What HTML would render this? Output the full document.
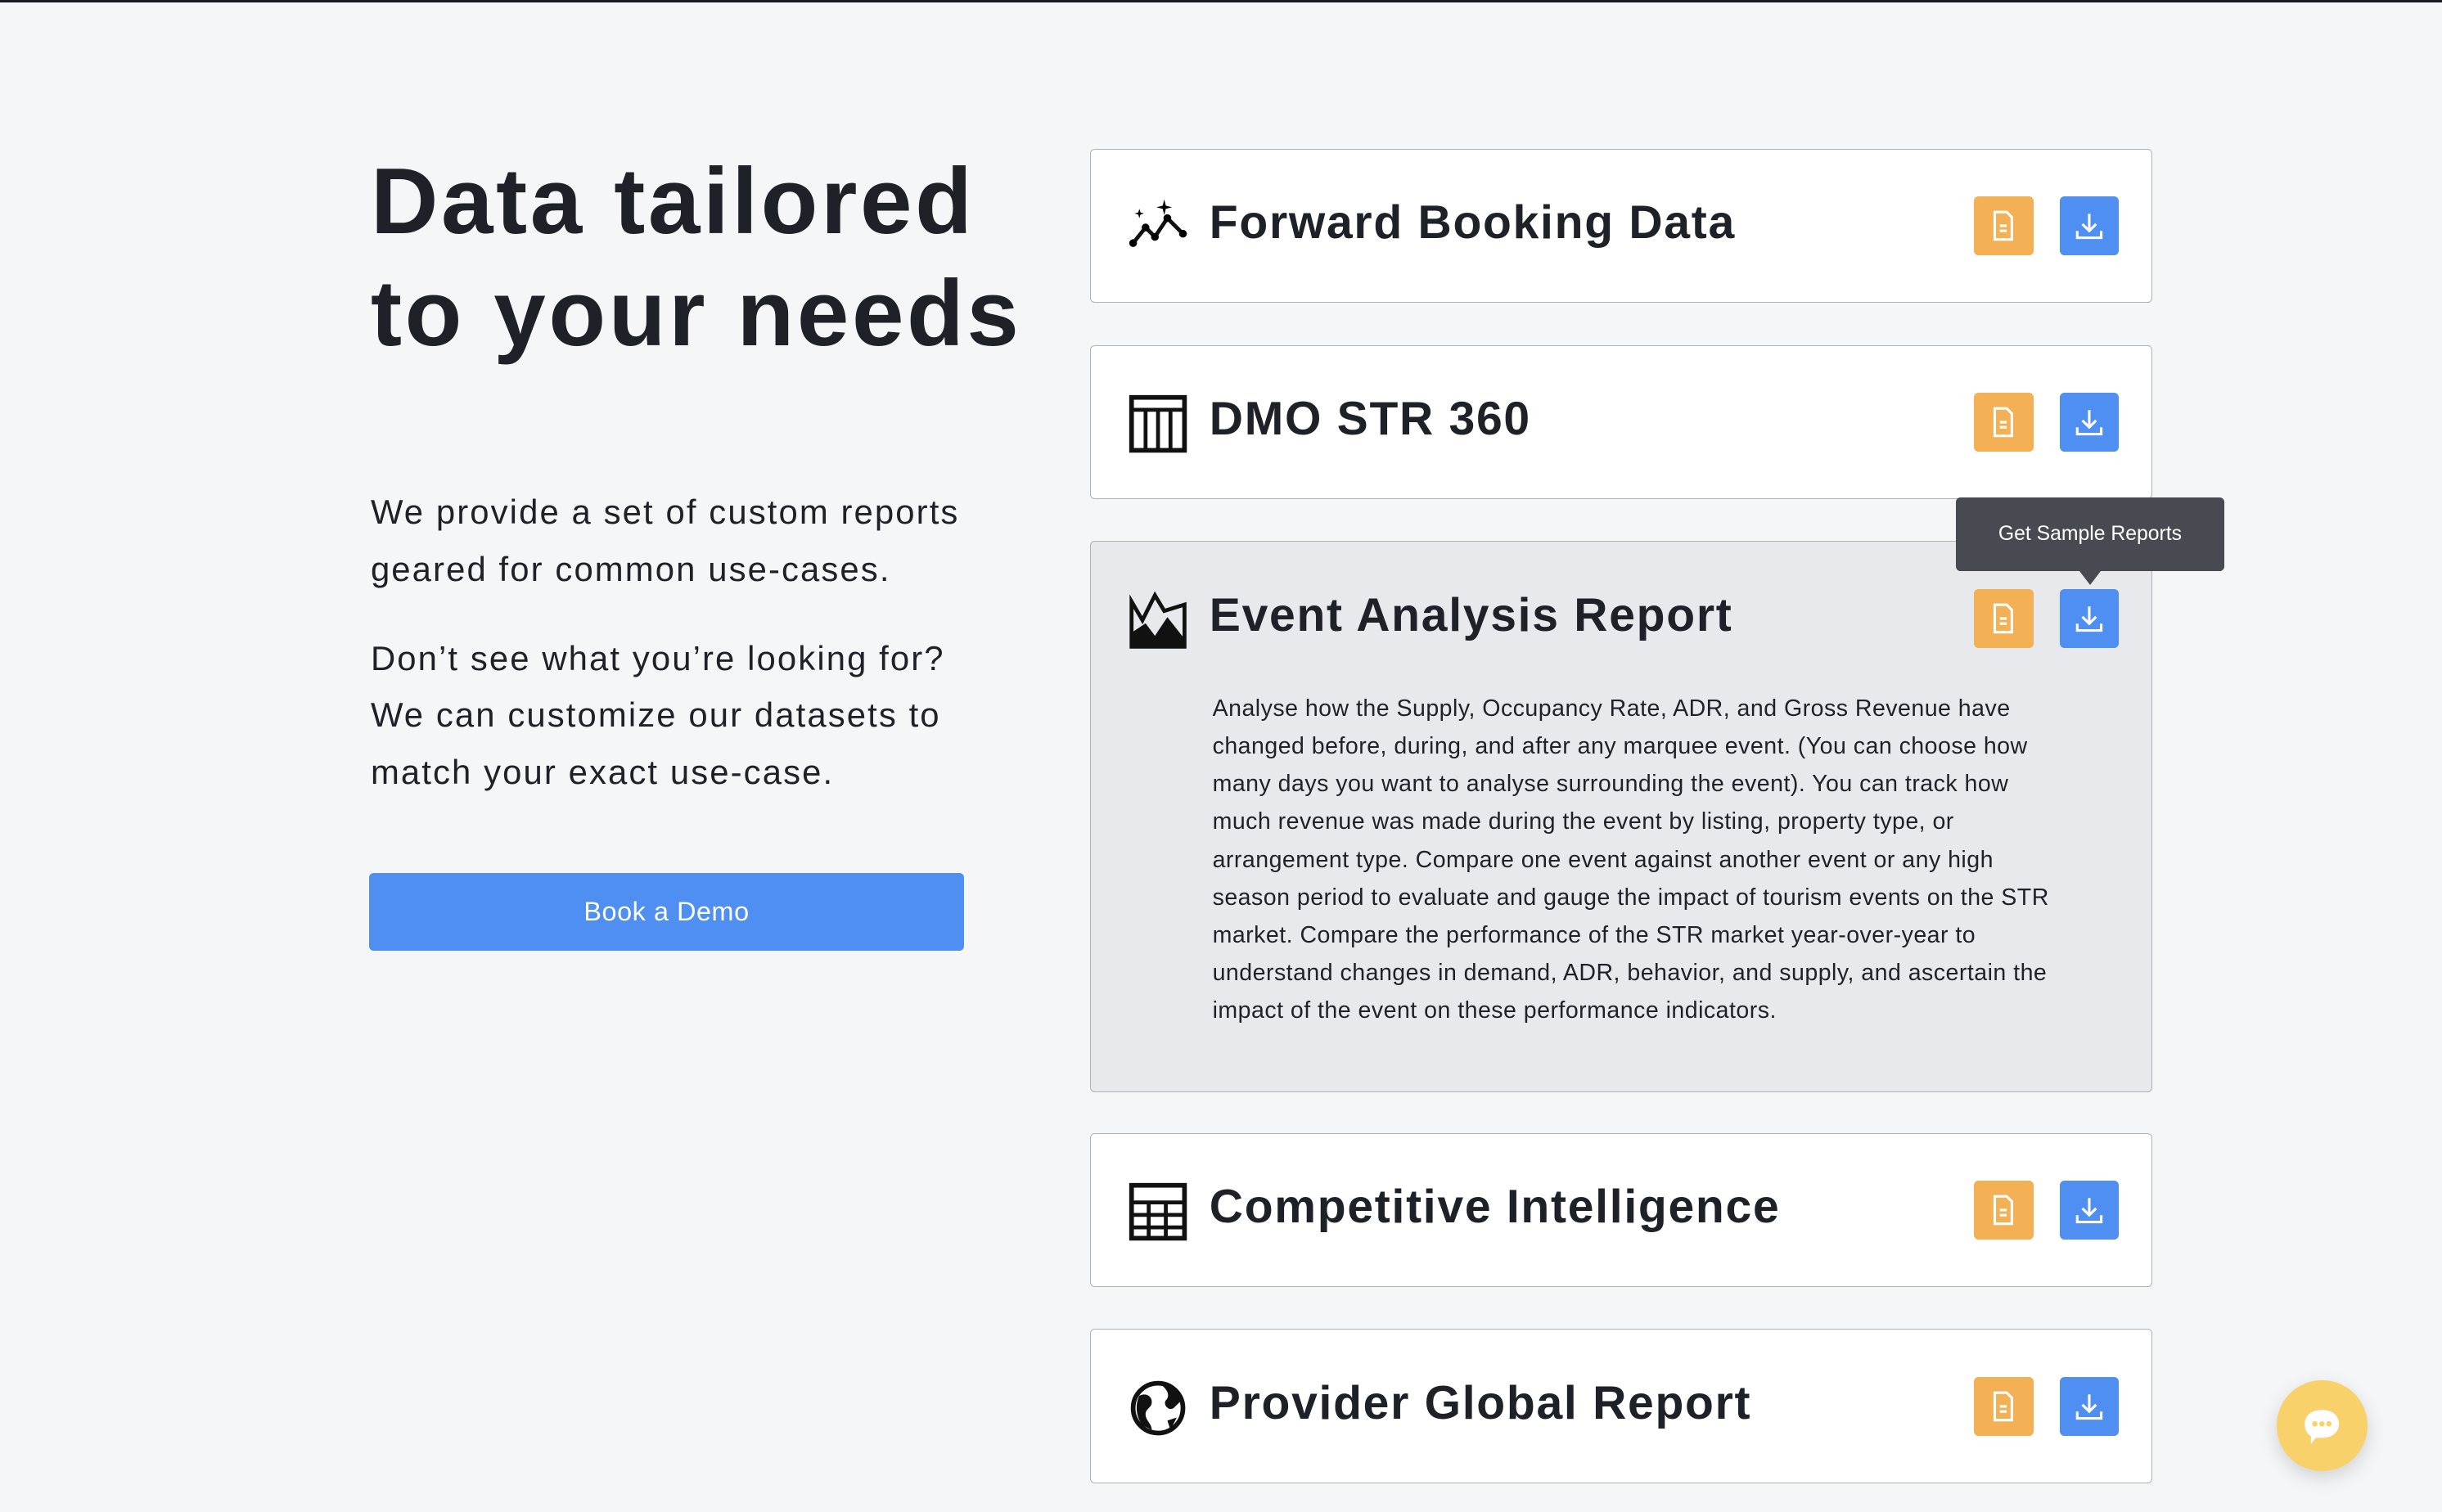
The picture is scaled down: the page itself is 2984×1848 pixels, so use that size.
<!DOCTYPE html>
<html><head><meta charset="utf-8"><style>
html,body{margin:0;padding:0}
body{width:1568px;height:971px;zoom:1.9031;background:#f5f6f8;font-family:"Liberation Sans",sans-serif;color:#1f2128;position:relative;overflow:hidden;border-top:2px solid #1a1c22;box-sizing:border-box}
.abs{position:absolute}
h1{position:absolute;left:238px;top:92px;margin:0;font-size:60px;line-height:72px;font-weight:bold;letter-spacing:1.9px}
.p{position:absolute;left:238px;font-size:22px;line-height:36.5px;margin:0;letter-spacing:1.1px}
.btn{position:absolute;left:237px;top:559px;width:382px;height:50px;background:#4f8ff2;border-radius:3px;color:#fff;font-size:17px;text-align:center;line-height:50px;letter-spacing:0.3px}
.card{position:absolute;left:700px;width:681px;height:98px;background:#fff;border:1px solid #b0b1b5;border-radius:3px}
.card .t{position:absolute;left:76px;top:27px;font-size:30px;font-weight:bold;line-height:40px;letter-spacing:0.9px}
.card .ic{position:absolute;left:23px;top:30px;width:40px;height:40px}
.o,.b{position:absolute;top:30px;width:38px;height:38px;border-radius:3px}
.o{left:567px;background:#f3b054}.b{left:622px;background:#4f8ff2}
.o svg,.b svg{position:absolute;left:8px;top:8px}
.desc{position:absolute;left:78px;top:95px;width:548px;font-size:15px;line-height:24.2px;color:#1f2128;letter-spacing:0.25px}
</style></head><body>
<h1>Data tailored<br>to your needs</h1>
<p class="p" style="top:309px">We provide a set of custom reports<br>geared for common use-cases.</p>
<p class="p" style="top:403px">Don’t see what you’re looking for?<br>We can customize our datasets to<br>match your exact use-case.</p>
<div class="btn">Book a Demo</div>

<div class="card" style="top:94px">
<svg class="ic" viewBox="0 0 40 40"><path d="M4 30 L12 20 L18 26 L26 14 L36 24" fill="none" stroke="#111" stroke-width="2.5"/><circle cx="4" cy="30" r="2.5"/><circle cx="12" cy="20" r="2.5"/><circle cx="18" cy="26" r="2.5"/><circle cx="26" cy="14" r="2.5"/><circle cx="36" cy="24" r="2.5"/><path d="M24 2 L25 6 L29 7 L25 8 L24 12 L23 8 L19 7 L23 6Z M8 8 L8.7 10.3 L11 11 L8.7 11.7 L8 14 L7.3 11.7 L5 11 L7.3 10.3Z"/></svg>
<div class="t">Forward Booking Data</div>
<div class="o"><svg width="22" height="22" viewBox="0 0 20 20"><path d="M5 2h7l3 3v13H5z M8 10h4 M8 13h4" fill="none" stroke="#fff" stroke-width="1.5"/></svg></div>
<div class="b"><svg width="22" height="22" viewBox="0 0 20 20"><path d="M10 3v10 M6 9l4 4 4-4 M3 13v4h14v-4" fill="none" stroke="#fff" stroke-width="1.5"/></svg></div>
</div>

<div class="card" style="top:220px">
<svg class="ic" viewBox="0 0 40 40"><rect x="3" y="3" width="34" height="34" fill="none" stroke="#111" stroke-width="3"/><path d="M3 11h34 M12 11v26 M20 11v26 M28 11v26" stroke="#111" stroke-width="2.5"/></svg>
<div class="t">DMO STR 360</div>
<div class="o"><svg width="22" height="22" viewBox="0 0 20 20"><path d="M5 2h7l3 3v13H5z M8 10h4 M8 13h4" fill="none" stroke="#fff" stroke-width="1.5"/></svg></div>
<div class="b"><svg width="22" height="22" viewBox="0 0 20 20"><path d="M10 3v10 M6 9l4 4 4-4 M3 13v4h14v-4" fill="none" stroke="#fff" stroke-width="1.5"/></svg></div>
</div>

<div class="card" style="top:346px;height:353px;background:#e8e9ec">
<svg class="ic" viewBox="0 0 40 40"><path d="M3 8 L10 20 L18 4 L24 14 L37 10 V37 H3Z" fill="none" stroke="#111" stroke-width="2.5"/><path d="M3 37 L3 28 L12 22 L18 30 L26 18 L37 32 V37Z" fill="#111"/></svg>
<div class="t">Event Analysis Report</div>
<div class="o"><svg width="22" height="22" viewBox="0 0 20 20"><path d="M5 2h7l3 3v13H5z M8 10h4 M8 13h4" fill="none" stroke="#fff" stroke-width="1.5"/></svg></div>
<div class="b"><svg width="22" height="22" viewBox="0 0 20 20"><path d="M10 3v10 M6 9l4 4 4-4 M3 13v4h14v-4" fill="none" stroke="#fff" stroke-width="1.5"/></svg></div>
<div class="desc">Analyse how the Supply, Occupancy Rate, ADR, and Gross Revenue have changed before, during, and after any marquee event. (You can choose how many days you want to analyse surrounding the event). You can track how much revenue was made during the event by listing, property type, or arrangement type. Compare one event against another event or any high season period to evaluate and gauge the impact of tourism events on the STR market. Compare the performance of the STR market year-over-year to understand changes in demand, ADR, behavior, and supply, and ascertain the impact of the event on these performance indicators.</div>
</div>

<div class="abs" style="left:1256px;top:318px;width:172px;height:47px;background:#474a51;border-radius:3px;color:#fff;font-size:13px;line-height:47px;text-align:center">Get Sample Reports</div>
<div class="abs" style="left:1335px;top:365px;width:0;height:0;border-left:7px solid transparent;border-right:7px solid transparent;border-top:9px solid #474a51"></div>

<div class="card" style="top:726px">
<svg class="ic" viewBox="0 0 40 40"><rect x="3" y="3" width="34" height="34" fill="none" stroke="#111" stroke-width="3"/><path d="M3 14h34 M3 22h34 M3 30h34 M14 14v23 M25 14v23" stroke="#111" stroke-width="2.5"/></svg>
<div class="t">Competitive Intelligence</div>
<div class="o"><svg width="22" height="22" viewBox="0 0 20 20"><path d="M5 2h7l3 3v13H5z M8 10h4 M8 13h4" fill="none" stroke="#fff" stroke-width="1.5"/></svg></div>
<div class="b"><svg width="22" height="22" viewBox="0 0 20 20"><path d="M10 3v10 M6 9l4 4 4-4 M3 13v4h14v-4" fill="none" stroke="#fff" stroke-width="1.5"/></svg></div>
</div>

<div class="card" style="top:852px">
<svg class="ic" viewBox="0 0 40 40"><circle cx="20" cy="20" r="16" fill="none" stroke="#111" stroke-width="3"/><path d="M8 12 C12 10 16 12 16 16 C16 20 12 20 12 24 C12 28 16 30 16 34 L10 31 C6 26 5 18 8 12Z M22 5 C26 8 28 12 25 15 C23 18 27 22 30 20 L34 16 C33 10 28 6 22 5Z M26 28 L32 26 L28 34Z" fill="#111"/></svg>
<div class="t">Provider Global Report</div>
<div class="o"><svg width="22" height="22" viewBox="0 0 20 20"><path d="M5 2h7l3 3v13H5z M8 10h4 M8 13h4" fill="none" stroke="#fff" stroke-width="1.5"/></svg></div>
<div class="b"><svg width="22" height="22" viewBox="0 0 20 20"><path d="M10 3v10 M6 9l4 4 4-4 M3 13v4h14v-4" fill="none" stroke="#fff" stroke-width="1.5"/></svg></div>
</div>

<div class="abs" style="left:1462px;top:885px;width:58px;height:58px;border-radius:50%;background:#f8d16b;box-shadow:0 4px 12px rgba(0,0,0,0.15)">
<svg width="58" height="58" viewBox="0 0 58 58"><path d="M29 19 C36 19 40 23 40 28 C40 33 36 37 29 37 L25 37 L22 41 L22 36 C19 34 18 31 18 28 C18 23 22 19 29 19Z" fill="#fff"/><circle cx="24.5" cy="28" r="1.7" fill="#f8d16b"/><circle cx="29" cy="28" r="1.7" fill="#f8d16b"/><circle cx="33.5" cy="28" r="1.7" fill="#f8d16b"/></svg>
</div>
</body></html>
